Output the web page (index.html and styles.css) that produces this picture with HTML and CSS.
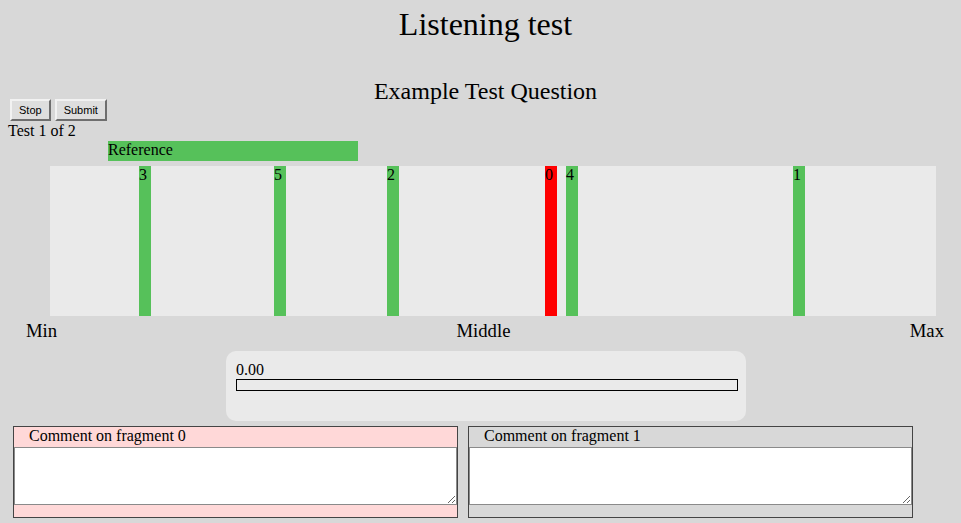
FILE: index.html
```html
<!DOCTYPE html>
<html>
<head>
<meta charset="utf-8">
<title>Listening test</title>
<link rel="stylesheet" href="styles.css">
</head>
<body>
<h1 class="title">Listening test</h1>
<h2 class="question">Example Test Question</h2>
<div class="controls">
  <button class="btn">Stop</button>
  <button class="btn">Submit</button>
</div>
<div class="progress-text">Test 1 of 2</div>
<div class="reference">Reference</div>
<div class="slider">
  <div class="marker" style="left:89px">3</div>
  <div class="marker" style="left:224px">5</div>
  <div class="marker" style="left:337px">2</div>
  <div class="marker active" style="left:495px">0</div>
  <div class="marker" style="left:516px">4</div>
  <div class="marker" style="left:743px">1</div>
</div>
<div class="scale">
  <span>Min</span>
  <span>Middle</span>
  <span>Max</span>
</div>
<div class="playback">
  <div class="time">0.00</div>
  <div class="playbar"></div>
</div>
<div class="comments">
  <div class="comment active">
    <div class="comment-title">Comment on fragment 0</div>
    <textarea class="comment-input"></textarea>
  </div>
  <div class="comment">
    <div class="comment-title">Comment on fragment 1</div>
    <textarea class="comment-input"></textarea>
  </div>
</div>
</body>
</html>
```
FILE: styles.css
```css
html, body {
  background: #d8d8d8;
}
body {
  margin: 0;
  padding: 0 8px;
  font-family: "Liberation Serif", "Times New Roman", serif;
  font-size: 16px;
  color: #000;
  overflow: hidden;
}
.title {
  margin: 6px 0 0;
  padding-left: 10px;
  text-align: center;
  font-size: 32px;
  line-height: 36px;
  font-weight: normal;
}
.question {
  margin: 42px 0 0;
  padding-left: 10px;
  text-align: center;
  font-size: 24px;
  line-height: 15px;
  height: 15px;
  font-weight: normal;
}
.controls {
  display: flex;
  gap: 4px;
  margin-left: 2px;
  height: 23px;
}
.btn {
  height: 22px;
  margin: 0;
  padding: 0 7px;
  font-family: "Liberation Sans", Arial, sans-serif;
  font-size: 11px;
  color: #000;
  background: #dedede;
  border: 2px solid;
  border-color: #f2f2f2 #6e6e6e #6e6e6e #f2f2f2;
}
.progress-text {
  line-height: 18px;
  height: 19px;
}
.reference {
  margin-left: 100px;
  width: 250px;
  height: 20px;
  line-height: 18px;
  background: #56c15a;
}
.slider {
  position: relative;
  margin: 5px 0 0 42px;
  width: 886px;
  height: 150px;
  background: #eaeaea;
}
.marker {
  position: absolute;
  top: 0;
  width: 12px;
  height: 150px;
  background: #56c15a;
  line-height: 18px;
}
.marker.active {
  background: #ff0000;
}
.scale {
  display: flex;
  justify-content: space-between;
  margin-top: 4px;
  padding: 0 9px 0 18px;
  font-size: 18.7px;
  line-height: 21px;
}
.playback {
  margin: 10px 0 0 218px;
  width: 520px;
  height: 70px;
  box-sizing: border-box;
  padding: 9px 8px 0 10px;
  background: #eaeaea;
  border-radius: 10px;
}
.time {
  line-height: 19px;
}
.playbar {
  height: 10px;
  border: 1px solid #000;
}
.comments {
  display: flex;
  gap: 10px;
  margin: 5px 0 0 5px;
}
.comment {
  width: 445px;
  box-sizing: border-box;
  border: 1px solid #444;
  padding-bottom: 12px;
  background: #d8d8d8;
}
.comment.active {
  background: #ffd8d8;
}
.comment-title {
  height: 20px;
  padding-left: 15px;
  line-height: 18px;
}
.comment-input {
  display: block;
  width: 100%;
  height: 58px;
  box-sizing: border-box;
  margin: 0;
  border: 1px solid #8a8a8a;
  background: #fff;
  font-family: "Liberation Mono", monospace;
  font-size: 13px;
}
```
